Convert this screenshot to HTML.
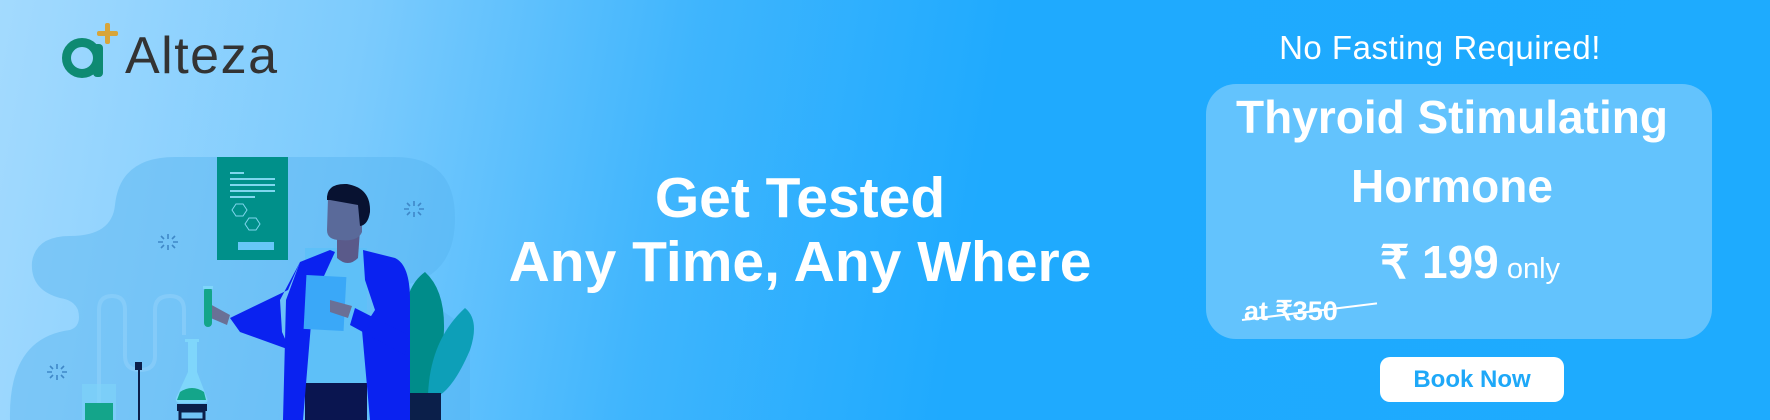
<!DOCTYPE html>
<html style="width:1770px;height:420px;overflow:hidden"><head><meta charset="utf-8"><style>
*{margin:0;padding:0;box-sizing:border-box}
body{width:1770px;height:420px;overflow:hidden;font-family:"Liberation Sans",sans-serif;position:relative;background:linear-gradient(100deg,#a3dafe 0%,#7ccbfd 20%,#3fb5fd 38%,#1faafe 55%,#1eabfe 100%)}
.a{position:absolute}
.c{color:#fff;font-weight:bold;text-align:center;white-space:nowrap}
</style></head><body>
<svg class="a" style="left:0;top:0" width="600" height="420" viewBox="0 0 600 420">
<path d="M175 157 H395 Q455 157 455 218 Q455 275 405 285 L470 330 L470 420 H10 Q8 338 70 330 Q82 326 78 310 Q74 300 60 298 Q30 290 32 262 Q36 236 70 236 Q112 236 115 205 Q120 157 175 157Z" fill="#56b4ef" opacity="0.45"/>
<rect x="217" y="157" width="71" height="103" fill="#00908a"/>
<rect x="230" y="172" width="14" height="2" fill="#7fd6ee"/>
<rect x="230" y="178" width="45" height="2" fill="#7fd6ee"/>
<rect x="230" y="184" width="45" height="2" fill="#7fd6ee"/>
<rect x="230" y="190" width="45" height="2" fill="#7fd6ee"/>
<rect x="230" y="196" width="25" height="2" fill="#7fd6ee"/>
<polygon points="232,210 236,204 243,204 247,210 243,216 236,216" fill="none" stroke="#7fd6ee" stroke-width="1"/>
<polygon points="245,224 249,218 256,218 260,224 256,230 249,230" fill="none" stroke="#7fd6ee" stroke-width="1"/>
<rect x="238" y="242" width="36" height="8" fill="#66c7f8"/>
<path d="M99 420 V310 Q99 296 112 296 Q125 296 125 310 V356 Q125 370 140 370 Q155 370 155 356 V310 Q155 296 170 296 Q184 296 184 310 V335" fill="none" stroke="#8fd1fa" stroke-width="4" opacity="0.6"/>
<rect x="82" y="384" width="34" height="36" fill="#7fd3f9" opacity="0.6"/>
<rect x="85" y="403" width="28" height="17" fill="#14a58a"/>
<rect x="138" y="365" width="2" height="55" fill="#0b1f4a"/><rect x="135" y="362" width="7" height="8" fill="#0b1f4a"/>
<path d="M188 342 V372 L176 398 Q175 403 181 403 H203 Q209 403 207 398 L197 372 V342Z" fill="#7fd6fb"/>
<path d="M180 392 Q192 384 204 392 L206 400 H177Z" fill="#14a58a"/>
<rect x="185" y="339" width="14" height="3" fill="#7fd6fb"/>
<rect x="177" y="404" width="30" height="7" fill="#0b1f4a"/>
<rect x="180" y="411" width="24" height="9" fill="none" stroke="#0b1f4a" stroke-width="3"/>
<path d="M405 340 Q400 290 425 272 Q445 290 444 330 Q442 375 430 395 H410Z" fill="#008c8a"/>
<path d="M428 395 Q430 340 465 308 Q480 320 470 350 Q455 385 440 395Z" fill="#0d9fb8"/>
<rect x="404" y="393" width="37" height="27" fill="#0b1f4a"/>
<rect x="305" y="248" width="62" height="145" fill="#5ec0f8"/>
<rect x="305" y="383" width="62" height="37" fill="#0a1550"/>
<path d="M330 250 L300 262 L286 300 L283 420 H303 L313 300 L335 252Z" fill="#0a22f0"/>
<path d="M363 250 L395 258 Q410 265 410 300 L410 420 H370 L362 330 L375 310 L365 280Z" fill="#0a22f0"/>
<path d="M300 262 L280 300 L282 332 L290 350 L240 332 L230 318 L288 290Z" fill="#0a22f0"/>
<path d="M208 303 L230 315 L227 325 L206 316Z" fill="#6a7096"/>
<rect x="204" y="287" width="8" height="40" rx="4" fill="#14a58a"/>
<rect x="203" y="286" width="10" height="3" fill="#7fd6fb"/>
<path d="M355 308 L408 335 L405 355 L350 325Z" fill="#0a22f0"/>
<rect x="305" y="276" width="40" height="54" fill="#3aa8f8" transform="rotate(3 325 303)"/>
<path d="M330 300 L352 306 L348 318 L330 312Z" fill="#6a7096"/>
<path d="M337 230 L360 230 L358 258 Q348 268 337 258Z" fill="#5a5a8a"/>
<path d="M328 198 Q328 190 340 188 L362 200 L362 232 Q358 242 340 240 Q327 240 327 230Z" fill="#5a6a9a"/>
<path d="M327 200 Q326 183 347 184 Q371 188 370 212 Q368 225 360 226 L358 205 L330 200Z" fill="#081231"/>
<g stroke="#3f88c8" stroke-width="1.6"><path d="M168 234 v5 M168 245 v5 M158 242 h5 M173 242 h5 M161 236 l3 3 M175 236 l-3 3 M161 248 l3 -3 M175 248 l-3 -3"/><path d="M414 201 v5 M414 212 v5 M404 209 h5 M419 209 h5 M407 203 l3 3 M421 203 l-3 3 M407 215 l3 -3 M421 215 l-3 -3"/><path d="M57 364 v5 M57 375 v5 M47 372 h5 M62 372 h5 M50 366 l3 3 M64 366 l-3 3 M50 378 l3 -3 M64 378 l-3 -3"/></g>
</svg>
<svg class="a" style="left:60px;top:22px" width="62" height="58" viewBox="0 0 62 58">
<rect x="45" y="1" width="5" height="21" rx="2" fill="#d8a53a"/><rect x="37" y="9" width="21" height="5" rx="2" fill="#d8a53a"/>
<circle cx="22" cy="36" r="15.5" fill="none" stroke="#0e8a72" stroke-width="9"/><rect x="33" y="22" width="10" height="33" rx="4" fill="#0e8a72"/>
</svg>
<div class="a" style="left:125px;top:30px;font-size:52px;line-height:52px;color:#333;letter-spacing:1.5px">Alteza</div>
<div class="a c" style="left:450px;width:700px;top:166px;font-size:57px;line-height:64px">Get Tested<br>Any Time, Any Where</div>
<div class="a c" style="left:1190px;width:500px;top:31px;font-size:33px;line-height:33px;font-weight:normal;letter-spacing:0.5px">No Fasting Required!</div>
<div class="a" style="left:1206px;top:84px;width:506px;height:255px;border-radius:30px;background:#63c3fd"></div>
<div class="a c" style="left:1202px;width:500px;top:83px;font-size:46px;line-height:69px">Thyroid Stimulating<br>Hormone</div>
<div class="a c" style="left:1220px;width:500px;top:239px;font-size:46px;line-height:46px">₹ 199<span style="font-size:29px;font-weight:normal"> only</span></div>
<div class="a" style="left:1244px;top:298px;font-size:27px;line-height:27px;color:#fff;font-weight:bold">at ₹350</div>
<div class="a" style="left:1242px;top:319px;width:136px;height:2px;background:#fff;transform:rotate(-7deg);transform-origin:left"></div>
<div class="a" style="left:1380px;top:357px;width:184px;height:45px;border-radius:10px;background:#fff;color:#1ea8f8;font-size:24px;font-weight:bold;text-align:center;line-height:45px">Book Now</div>
</body></html>
